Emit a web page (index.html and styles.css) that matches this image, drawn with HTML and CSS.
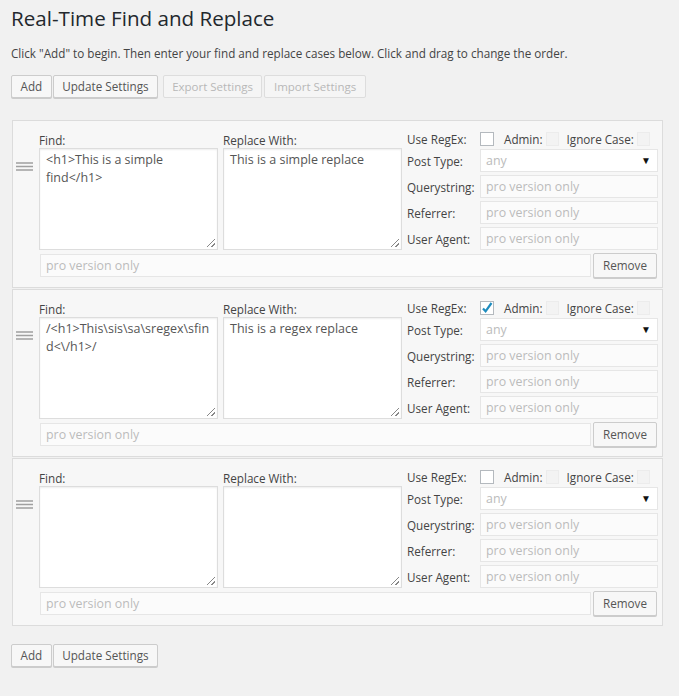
FILE: index.html
```html
<!DOCTYPE html>
<html>
<head>
<meta charset="utf-8">
<link rel="stylesheet" href="styles.css">
</head>
<body>
<div class="wrap">
  <h1 class="title">Real-Time Find and Replace</h1>
  <p class="intro">Click "Add" to begin. Then enter your find and replace cases below. Click and drag to change the order.</p>
  <div class="btns">
    <button class="btn">Add</button><button class="btn">Update Settings</button><button class="btn dis">Export Settings</button><button class="btn dis">Import Settings</button>
  </div>

  <div class="cards">
    <div class="card">
      <div class="top">
        <div class="handle"><svg width="17" height="9" viewBox="0 0 17 9"><path d="M0 1h17M0 4.5h17M0 8h17" stroke="#a0a0a0" stroke-width="1.4"/></svg></div>
        <div class="col">
          <div class="lbl">Find:</div>
          <div class="ta">&lt;h1&gt;This is a simple find&lt;/h1&gt;<span class="grip"></span></div>
        </div>
        <div class="col">
          <div class="lbl">Replace With:</div>
          <div class="ta">This is a simple replace<span class="grip"></span></div>
        </div>
        <div class="opts">
          <div class="orow checks"><span class="olbl">Use RegEx:</span><span class="cb"></span><span class="clbl">Admin:</span><span class="cb ghost"></span><span class="clbl">Ignore Case:</span><span class="cb ghost"></span></div>
          <div class="orow"><span class="olbl">Post Type:</span><div class="sel">any<span class="arr">▼</span></div></div>
          <div class="orow"><span class="olbl">Querystring:</span><div class="inp">pro version only</div></div>
          <div class="orow"><span class="olbl">Referrer:</span><div class="inp">pro version only</div></div>
          <div class="orow"><span class="olbl">User Agent:</span><div class="inp">pro version only</div></div>
        </div>
      </div>
      <div class="bottom"><div class="inp wide">pro version only</div><button class="btn rm">Remove</button></div>
    </div>

    <div class="card">
      <div class="top">
        <div class="handle"><svg width="17" height="9" viewBox="0 0 17 9"><path d="M0 1h17M0 4.5h17M0 8h17" stroke="#a0a0a0" stroke-width="1.4"/></svg></div>
        <div class="col">
          <div class="lbl">Find:</div>
          <div class="ta">/&lt;h1&gt;This\sis\sa\sregex\sfind&lt;\/h1&gt;/<span class="grip"></span></div>
        </div>
        <div class="col">
          <div class="lbl">Replace With:</div>
          <div class="ta">This is a regex replace<span class="grip"></span></div>
        </div>
        <div class="opts">
          <div class="orow checks"><span class="olbl">Use RegEx:</span><span class="cb"><svg width="14" height="14" viewBox="0 0 14 14"><path d="M3 7.5l2.6 2.8L11.5 2" fill="none" stroke="#1e8cbe" stroke-width="2.2"/></svg></span><span class="clbl">Admin:</span><span class="cb ghost"></span><span class="clbl">Ignore Case:</span><span class="cb ghost"></span></div>
          <div class="orow"><span class="olbl">Post Type:</span><div class="sel">any<span class="arr">▼</span></div></div>
          <div class="orow"><span class="olbl">Querystring:</span><div class="inp">pro version only</div></div>
          <div class="orow"><span class="olbl">Referrer:</span><div class="inp">pro version only</div></div>
          <div class="orow"><span class="olbl">User Agent:</span><div class="inp">pro version only</div></div>
        </div>
      </div>
      <div class="bottom"><div class="inp wide">pro version only</div><button class="btn rm">Remove</button></div>
    </div>

    <div class="card">
      <div class="top">
        <div class="handle"><svg width="17" height="9" viewBox="0 0 17 9"><path d="M0 1h17M0 4.5h17M0 8h17" stroke="#a0a0a0" stroke-width="1.4"/></svg></div>
        <div class="col">
          <div class="lbl">Find:</div>
          <div class="ta"><span class="grip"></span></div>
        </div>
        <div class="col">
          <div class="lbl">Replace With:</div>
          <div class="ta"><span class="grip"></span></div>
        </div>
        <div class="opts">
          <div class="orow checks"><span class="olbl">Use RegEx:</span><span class="cb"></span><span class="clbl">Admin:</span><span class="cb ghost"></span><span class="clbl">Ignore Case:</span><span class="cb ghost"></span></div>
          <div class="orow"><span class="olbl">Post Type:</span><div class="sel">any<span class="arr">▼</span></div></div>
          <div class="orow"><span class="olbl">Querystring:</span><div class="inp">pro version only</div></div>
          <div class="orow"><span class="olbl">Referrer:</span><div class="inp">pro version only</div></div>
          <div class="orow"><span class="olbl">User Agent:</span><div class="inp">pro version only</div></div>
        </div>
      </div>
      <div class="bottom"><div class="inp wide">pro version only</div><button class="btn rm">Remove</button></div>
    </div>
  </div>

  <div class="btns foot">
    <button class="btn">Add</button><button class="btn">Update Settings</button>
  </div>
</div>
</body>
</html>
```
FILE: styles.css
```css
html, body {
  margin: 0;
  padding: 0;
  background: #f1f1f1;
}
body {
  font-family: "Open Sans", "Liberation Sans", sans-serif;
  color: #444;
  width: 679px;
  height: 696px;
  overflow: hidden;
}
.wrap {
  padding: 0 16px 0 11px;
}
.title {
  margin: 0;
  padding-top: 5px;
  font-size: 20.6px;
  font-weight: 400;
  line-height: 26px;
  color: #23282d;
}
.intro {
  margin: 14px 0 0;
  font-size: 11.7px;
  line-height: 16px;
  color: #444;
}
.btns {
  display: flex;
  margin-top: 14px;
}
.btn {
  font-family: "Open Sans", "Liberation Sans", sans-serif;
  font-size: 11.7px;
  color: #555;
  background: #f7f7f7;
  border: 1px solid #ccc;
  border-radius: 2px;
  box-shadow: 0 1px 0 #ccc;
  height: 23px;
  padding: 0 8.5px;
  margin: 0 1px 0 0;
  line-height: 21px;
}
.btn.dis {
  color: #b8b8b8;
  background: #f5f5f5;
  border-color: #ddd;
  box-shadow: none;
  margin-left: 4px;
  font-size: 11.5px;
  padding: 0 8px;
}
.btn.dis + .btn.dis { margin-left: 1px; padding: 0 9px; }
.cards {
  margin-top: 22px;
  margin-left: 1px;
  display: flex;
  flex-direction: column;
  gap: 1px;
}
.card {
  border: 1px solid #dcdcdc;
  background: #f7f7f7;
  box-sizing: border-box;
  height: 168px;
  padding: 11px 4px 0 0;
}
.top {
  display: flex;
}
.handle {
  width: 26px;
  padding-top: 30px;
  box-sizing: border-box;
  padding-left: 3px;
}
.handle svg { display: block; }
.col {
  width: 179px;
  margin-right: 5px;
}
.lbl {
  font-size: 11.7px;
  line-height: 16px;
  height: 16px;
  color: #444;
}
.ta {
  position: relative;
  box-sizing: border-box;
  height: 102px;
  background: #fff;
  border: 1px solid #ddd;
  box-shadow: inset 0 1px 2px rgba(0,0,0,0.07);
  padding: 2px 6px;
  font-size: 12.5px;
  line-height: 18px;
  color: #555;
  overflow-wrap: break-word;
}
.grip {
  position: absolute;
  right: 2px;
  bottom: 2px;
  width: 8px;
  height: 8px;
  background: linear-gradient(135deg, transparent 45%, #888 45%, #888 55%, transparent 55%, transparent 72%, #888 72%, #888 82%, transparent 82%);
}
.opts {
  width: 251px;
  display: flex;
  flex-direction: column;
  gap: 3px;
}
.orow {
  display: flex;
  align-items: center;
  height: 23px;
}
.orow.checks {
  height: 14px;
}
.olbl {
  width: 73px;
  flex: none;
  font-size: 11.7px;
  color: #444;
  white-space: nowrap;
}
.clbl {
  font-size: 11.7px;
  color: #444;
  margin: 0 3px 0 10px;
  white-space: nowrap;
}
.clbl + .cb.ghost + .clbl { margin-left: 8px; }
.cb {
  box-sizing: border-box;
  width: 14px;
  height: 14px;
  background: #fff;
  border: 1px solid #b4b9be;
  display: block;
  flex: none;
}
.cb svg { display: block; margin: -1px; }
.cb.ghost {
  width: 13px;
  background: #f3f3f3;
  border-color: #ececec;
}
.sel, .inp {
  box-sizing: border-box;
  width: 178px;
  height: 23px;
  background: #fbfbfb;
  border: 1px solid #e6e6e6;
  font-size: 12.4px;
  line-height: 21px;
  color: #bbb;
  padding: 0 5px;
  position: relative;
}
.sel { background: #fff; }
.arr {
  position: absolute;
  right: 6px;
  top: 0;
  font-size: 10px;
  color: #111;
}
.bottom {
  display: flex;
  margin-top: 3px;
  margin-left: 27px;
  align-items: flex-start;
}
.inp.wide {
  width: 552px;
  margin-top: 1px;
}
.btn.rm {
  margin-left: 2px;
  height: 25px;
  padding: 0 9px;
  background: #f7f7f7;
}
.btns.foot {
  margin-top: 18px;
}
```
